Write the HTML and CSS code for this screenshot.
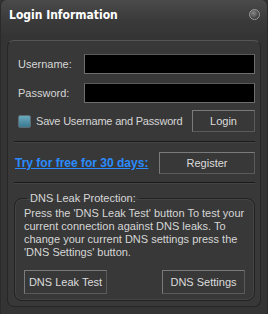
FILE: index.html
```html
<!DOCTYPE html>
<html lang="en">
<head>
    <meta charset="UTF-8">
    <title>Login Information</title>
    <link rel="stylesheet" href="styles.css">
</head>
<body>

    <div class="window">
        <!-- Title bar -->
        <div class="titlebar">
            <span class="title">Login Information</span>
            <span class="close-dot"></span>
        </div>

        <div class="panel">
            <form class="login-form">
                <div class="form-row">
                    <label for="username">Username:</label>
                    <input type="text" id="username">
                </div>
                <div class="form-row">
                    <label for="password">Password:</label>
                    <input type="password" id="password">
                </div>
                <div class="save-row">
                    <label class="save-check">
                        <span class="checkbox"></span>
                        Save Username and Password
                    </label>
                    <button type="button" class="btn btn-login">Login</button>
                </div>
            </form>

            <div class="separator"></div>

            <div class="register-row">
                <a href="#" class="trial-link">Try for free for 30 days:</a>
                <button type="button" class="btn btn-register">Register</button>
            </div>

            <div class="separator"></div>

            <!-- DNS leak protection -->
            <fieldset class="dns-group">
                <legend>DNS Leak Protection:</legend>
                <p class="dns-text">Press the 'DNS Leak Test' button To test your current connection against DNS leaks. To change your current DNS settings press the 'DNS Settings' button.</p>
                <div class="dns-buttons">
                    <button type="button" class="btn btn-dns">DNS Leak Test</button>
                    <button type="button" class="btn btn-dns">DNS Settings</button>
                </div>
            </fieldset>
        </div>
    </div>

</body>
</html>
```

FILE: styles.css
```css
body {
    margin: 0;
    background-color: #333333;
    font-family: "Liberation Sans", Arial, sans-serif;
    font-size: 11px;
    color: #d6d6d6;
}

.window {
    width: 268px;
    height: 314px;
    background-color: #343434;
    border-radius: 6px 6px 0 0;
    box-sizing: border-box;
    border-left: 1px solid #2a2a2a;
    border-right: 1px solid #2a2a2a;
}

.titlebar {
    height: 34px;
    display: flex;
    align-items: center;
    justify-content: space-between;
    padding: 0 7px 5px 8px;
    box-sizing: border-box;
    background: linear-gradient(#4a4a4a, #3a3a3a 60%, #353535);
    border-radius: 6px 6px 0 0;
}

.title {
    font-family: "DejaVu Sans Condensed", "DejaVu Sans", sans-serif;
    font-weight: bold;
    font-size: 12px;
    color: #ffffff;
}

.close-dot {
    width: 9px;
    height: 9px;
    border-radius: 50%;
    background: radial-gradient(circle at 40% 35%, #8a8a8a, #3c3c3c 70%);
    border: 1px solid #9a9a9a;
}

.panel {
    margin: 6px 6px 0 6px;
    height: 267px;
    box-sizing: border-box;
    border: 1px solid #262626;
    border-top-color: #555555;
    border-radius: 7px;
    background-color: #383838;
    padding: 13px 5px 0 6px;
}

.form-row {
    display: grid;
    grid-template-columns: 70px 1fr;
    align-items: center;
    margin-bottom: 9px;
}

.form-row label {
    padding-left: 4px;
}

.form-row input {
    width: 100%;
    min-width: 0;
    height: 20px;
    box-sizing: border-box;
    background-color: #000000;
    border: 1px solid #6e6e6e;
    border-top-color: #5a5a5a;
    color: #ffffff;
    padding: 0 3px;
}

.save-row {
    display: flex;
    align-items: center;
    justify-content: space-between;
    margin-top: -2px;
}

.save-check {
    display: flex;
    align-items: center;
    gap: 5px;
    padding-left: 4px;
    letter-spacing: -0.2px;
}

.checkbox {
    width: 11px;
    height: 11px;
    border: 1px solid #5d6c72;
    border-radius: 2px;
    background: linear-gradient(#6aa8bd, #3a7a90);
}

.btn {
    height: 22px;
    box-sizing: border-box;
    background-color: #383838;
    border: 1px solid #7a7a7a;
    border-right-color: #5a5a5a;
    border-bottom-color: #5a5a5a;
    color: #dcdcdc;
    font-family: "Liberation Sans", Arial, sans-serif;
    font-size: 11px;
    padding: 0;
}

.btn-login {
    width: 63px;
}

.separator {
    margin: 9px 0 0 0;
    border-top: 1px solid #1a1a1a;
    border-bottom: 1px solid #444444;
}

.register-row {
    display: flex;
    align-items: center;
    justify-content: space-between;
    margin-top: 9px;
    margin-bottom: -1px;
}

.trial-link {
    color: #2a8cff;
    font-weight: bold;
    font-size: 12px;
    padding-left: 1px;
}

.btn-register {
    width: 96px;
}

.dns-group {
    margin: 8px 0 0 0;
    padding: 0 9px 6px 9px;
    border: 1px solid #222222;
    box-shadow: inset 0 0 0 1px #444444;
    border-radius: 8px;
}

.dns-group legend {
    padding: 0 3px;
    margin-left: 3px;
}

.dns-text {
    margin: 3px 0 0 0;
    line-height: 13px;
}

.dns-buttons {
    display: flex;
    justify-content: space-between;
    margin-top: 11px;
}

.btn-dns {
    width: 83px;
    height: 24px;
}
```
